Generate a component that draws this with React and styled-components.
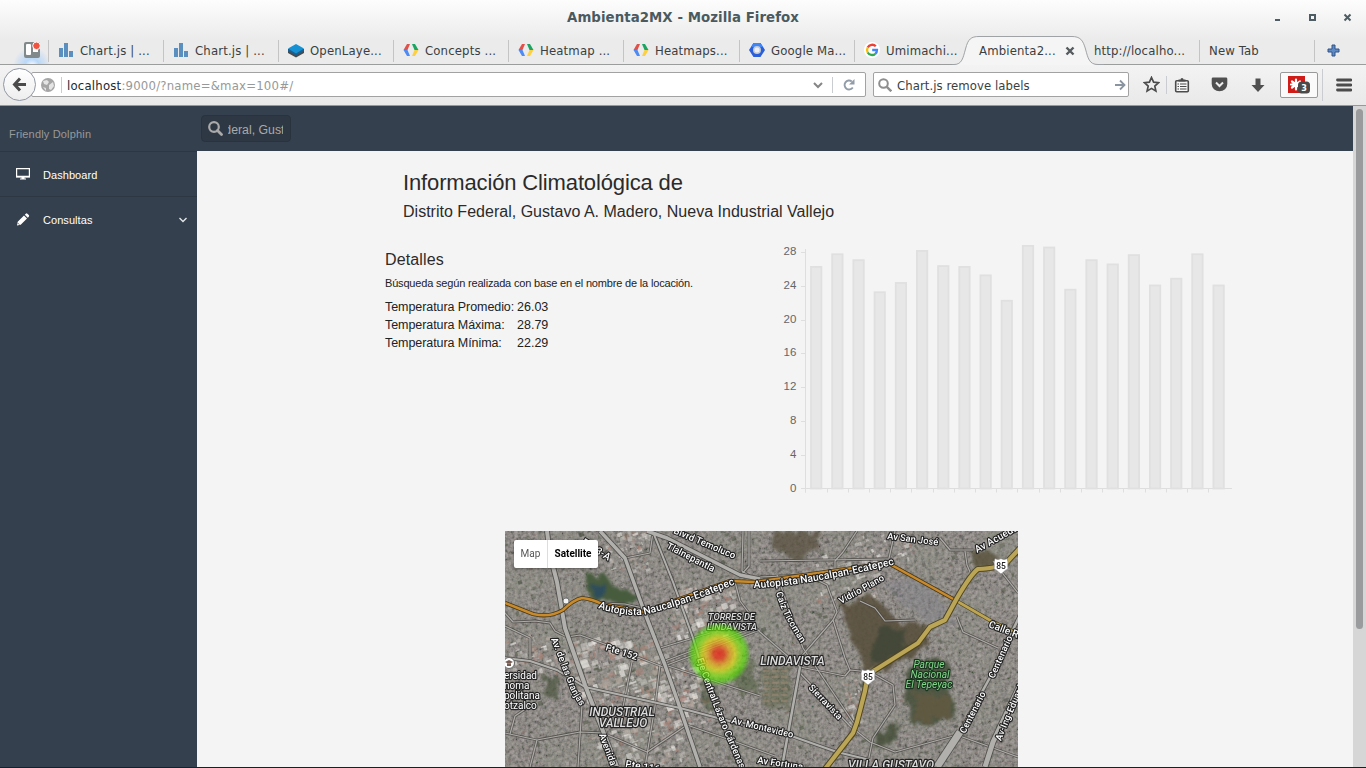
import React from 'react';
import styled, { createGlobalStyle } from 'styled-components';

const Global = createGlobalStyle`
  * { box-sizing: border-box; }
  html, body { margin: 0; height: 100%; overflow: hidden; }
  body { font-family: "Liberation Sans", Arial, sans-serif; color: #333; background: #f4f4f4; }
`;

const ui = '"DejaVu Sans Condensed", "DejaVu Sans", sans-serif';

const Window = styled.div`
  width: 1366px; height: 768px; display: flex; flex-direction: column;
  overflow: hidden; border-bottom: 1px solid #1e1e1e;
`;
const Chrome = styled.header`
  flex: none; height: 106px; display: flex; flex-direction: column;
  background: linear-gradient(#fdfdfd 0, #ebebeb 40px, #ebebeb 64px);
  font: 13px ${ui}; font-stretch: condensed; color: #3a3f42;
`;
const TitleBar = styled.div`
  height: 36px; display: grid; grid-template-columns: 110px 1fr 110px; align-items: center;
  font: bold 13.33px "DejaVu Sans", sans-serif; font-stretch: normal; color: #4a5a60;
  padding-bottom: 2px;
`;
const Title = styled.div`text-align: center; letter-spacing: 0.06px;`;
const WindowButtons = styled.svg`width: 110px; height: 34px;`;
const Strip = styled.div`height: 29px; display: flex; border-bottom: 1px solid #9b9c9c;`;
const Pinned = styled.div`
  width: 49px; display: flex; align-items: center; padding-left: 24px; position: relative;
  background: radial-gradient(circle at 32px 30px, #fff 0, #b9d8f8 7px, rgba(190, 216, 245, .5) 14px, transparent 19px);
  &::after { content: ''; position: absolute; right: 0; top: 4px; bottom: 2px; width: 1px; background: #c4c4c4; }
`;
const Tab = styled.div`
  width: ${(p) => p.$w || 115}px; display: flex; align-items: center; gap: 6px; padding-left: 9px;
  position: relative; white-space: nowrap;
  &::after {
    content: ''; position: absolute; right: 0; top: 4px; bottom: 2px; width: 1px;
    background: ${(p) => (p.$plain ? 'transparent' : '#c4c4c4')};
  }
`;
const Label = styled.span`position: relative; letter-spacing: 0.15px;`;
const TabShape = styled.svg`position: absolute; left: -18px; top: 0; width: 152px; height: 29px;`;
const CloseMark = styled.svg`position: absolute; left: 95px; top: 10px; width: 10px; height: 10px;`;
const NewTab = styled.div`width: 36px; display: grid; place-items: center;`;
const Icon = styled.svg`flex: none; display: block; width: ${(p) => p.$s || 16}px; height: ${(p) => p.$s || 16}px;`;

const Toolbar = styled.div`
  height: 41px; display: flex; align-items: center; padding: 0 11px 1px 3px;
  background: linear-gradient(#f3f3f3, #e9e9e9); border-bottom: 1px solid #96999b;
`;
const Back = styled.div`
  width: 33px; height: 33px; border-radius: 50%; border: 1px solid #8f98a4; background: linear-gradient(#fff, #eee);
  display: grid; place-items: center; flex: none; z-index: 1;
`;
const Field = styled.div`
  width: ${(p) => p.$w}px; height: 25px; display: flex; align-items: center; background: #fff;
  border: 1px solid #a2a2a2; border-radius: 2px; margin-left: ${(p) => p.$ml}px; padding-left: ${(p) => p.$pl}px; white-space: pre;
`;
const Url = styled.div`flex: 1; padding-top: 2px; letter-spacing: 0.21px; color: #96999a; span { color: #24292c; }`;
const Query = styled.div`flex: 1; margin-left: 5px; padding-top: 2px; letter-spacing: 0.06px;`;
const Rule = styled.div`width: 1px; height: ${(p) => p.$h}px; background: #c9cdd1; margin: 0 ${(p) => p.$r}px 0 ${(p) => p.$l}px;`;
const Tools = styled.div`display: flex; align-items: center; margin-left: 14px;`;
const Addon = styled.div`
  width: 38px; height: 26px; margin-left: 14px; border: 1px solid #999; border-radius: 2px; background: #fafafa;
  display: grid; place-items: center;
`;

const Page = styled.div`flex: 1; display: flex; min-height: 0; background: #f4f4f4;`;
const Sidebar = styled.nav`width: 197px; background: #34404d; flex: none; font-size: 11px; color: #fff;`;
const Brand = styled.div`height: 46px; padding: 21px 9px 0; color: #999; border-bottom: 1px solid #2c3742; line-height: 14px; letter-spacing: 0.17px;`;
const Item = styled.div`
  height: 45px; display: flex; align-items: center; padding: 0 9px 0 15px;
  border-bottom: ${(p) => (p.$last ? 'none' : '1px solid #2c3742')};
  span { margin-left: 12px; flex: 1; padding-top: 1px; letter-spacing: 0.06px; }
`;
const Main = styled.main`flex: 1; display: flex; flex-direction: column; min-width: 0;`;
const Topbar = styled.div`height: 45px; flex: none; background: #34404d; padding: 9px 4px;`;
const Search = styled.div`
  width: 90px; height: 27px; border-radius: 4px; background: #2d3844; border: 1px solid #29333e;
  display: flex; align-items: center; padding-left: 6px; color: #aaa; font-size: 12px;
`;
const Clip = styled.div`
  width: 55px; margin-left: 5px; overflow: hidden; display: flex; justify-content: flex-end;
  white-space: nowrap; padding-top: 2px; font-size: 12.3px;
  span { margin-right: -1.5px; }
`;
const Heading = styled.div`padding: 19px 0 0 206px;`;
const H1 = styled.h1`margin: 0; font-weight: 400; font-size: 22px; line-height: 26px; color: #2b2b2b; letter-spacing: -0.14px;`;
const H2 = styled.h2`margin: 5px 0 0; font-weight: 400; font-size: 16px; line-height: 22px; color: #2b2b2b; letter-spacing: 0.015px;`;
const Columns = styled.div`display: flex; padding: 17px 0 0 188px; height: 308px;`;
const Details = styled.section`width: 385px; padding-top: 10px;`;
const H3 = styled.h3`margin: 0; font-weight: 400; font-size: 16px; line-height: 20px; color: #2b2b2b; letter-spacing: 0.14px;`;
const Note = styled.p`margin: 6px 0 7px; font-size: 11px; line-height: 15px; color: #222; letter-spacing: -0.175px;`;
const Stats = styled.dl`
  margin: 0; display: grid; grid-template-columns: 132px auto; line-height: 18px; font-size: 12.5px; color: #222;
  dt, dd { margin: 0; white-space: nowrap; }
  dt { letter-spacing: -0.07px; }
`;
const ChartSvg = styled.svg`width: 480px; height: 262px; font: 11.5px "Liberation Sans", sans-serif;`;
const MapFrame = styled.div`width: 513px; height: 236px; margin-left: 308px; position: relative; overflow: hidden;`;
const MapSvg = styled.svg`display: block; width: 513px; height: 236px; font-family: Roboto, sans-serif;`;
const MapTypes = styled.div`
  position: absolute; left: 9px; top: 9px; display: flex; height: 28px; border-radius: 2px; background: #fff;
  box-shadow: 0 1px 3px rgba(0, 0, 0, .4); font: 10px/28px Roboto, sans-serif;
`;
const MapType = styled.div`
  width: ${(p) => p.$w}px; text-align: center; color: ${(p) => (p.$on ? '#000' : '#565656')};
  font-weight: ${(p) => (p.$on ? 700 : 400)}; border-left: ${(p) => (p.$on ? '1px solid #ddd' : 'none')};
`;
const Scroll = styled.div`width: 13px; background: #d6d6d6; padding: 3px 3px 0;`;
const Thumb = styled.div`height: 520px; width: 7px; border-radius: 4px; background: #999b9d;`;

const ChartMark = () => (
  <Icon viewBox="0 0 16 16" fill="#5b8fc0"><path d="M1 6h4v9H1zM6 1h4v14H6zM11 9h4v6h-4z" /></Icon>
);
const DevMark = () => (
  <Icon viewBox="0 0 16 16">
    <path d="M4 2h3L4.500 8H0.500z" fill="#e2504a" /><path d="M.5 8h4L7 14H4z" fill="#4d8bf5" />
    <path d="M9 2h3l3.500 6h-4z" fill="#1da463" /><path d="M11.500 8h4L12 14H9z" fill="#fdd041" />
  </Icon>
);
const LayersMark = () => (
  <Icon viewBox="0 0 16 16">
    <path d="M0 8v3l8 4.500 8-4.500V8z" fill="#4a4a4a" /><path d="M0 7v2l8 4.500 8-4.500V7z" fill="#1b5f91" />
    <path d="M0 6.500 8 2l8 4.500L8 11.500z" fill="#1591d4" />
  </Icon>
);
const HexMark = () => (
  <Icon viewBox="0 0 16 16">
    <path d="M4.500 1h7L16 8l-4.500 7h-7L0 8z" fill="#2b5fd9" /><path d="M4.500 1h7L14 5H2z" fill="#4285f4" />
    <circle cx="8" cy="8" r="4" fill="#c4c9d2" /><circle cx="8" cy="8" r="2.500" fill="#eceff4" />
  </Icon>
);
const GMark = () => (
  <Icon viewBox="0 0 16 16" fill="none" strokeWidth="2.300">
    <circle cx="8" cy="8" r="8" fill="#fff" />
    <path d="M11.800 4.300A5 5 0 0 0 3.700 5.500" stroke="#ea4335" /><path d="M3.700 5.500a5 5 0 0 0 0 5" stroke="#fbbc05" />
    <path d="M3.700 10.500a5 5 0 0 0 7.600 1.300" stroke="#34a853" /><path d="M11.300 11.800A4.800 4.800 0 0 0 13 8H8.200" stroke="#4285f4" />
  </Icon>
);

const temps = [26.3, 27.8, 27.1, 23.3, 24.4, 28.2, 26.4, 26.3, 25.3, 22.29, 28.79, 28.6, 23.6, 27.1, 26.6, 27.7, 24.1, 24.9, 27.8, 24.1];
const Chart = () => {
  const base = 248.5;
  const k = 8.44;
  return (
    <ChartSvg viewBox="0 0 480 262">
      <g stroke="#dedede">
        <path d={`M35.500 9V${base + 4}M31 ${base}H462`} fill="none" />
        {[4, 8, 12, 16, 20, 24, 28].map((v) => <path key={v} d={`M31 ${Math.round(base - v * k) + 0.5}h5`} />)}
        {temps.map((_, i) => <path key={i} d={`M${Math.floor(35.9 + i * 21.2) + 0.5} ${base}v4`} />)}
      </g>
      {[0, 4, 8, 12, 16, 20, 24, 28].map((v) => (
        <text key={v} x="26.300" y={base - v * k + 3} textAnchor="end" fill="#666">{v}</text>
      ))}
      {temps.map((t, i) => (
        <rect key={i} x={41 + i * 21.18} y={base - t * k + 0.4} width="10.400" height={t * k - 0.4} fill="#e7e7e7" stroke="#e0e0e0" strokeWidth="1.800" />
      ))}
    </ChartSvg>
  );
};

function random(seed) {
  let s = seed;
  return () => {
    s = (s * 1664525 + 1013904223) % 4294967296;
    return s / 4294967296;
  };
}
const rnd = random(77);
const scatter = (n, [x, y, w, h], colors, max) =>
  Array.from({ length: n }, () => ({
    x: x + rnd() * w, y: y + rnd() * h, w: 1 + rnd() * max, h: 1 + rnd() * max * 0.8,
    c: colors[Math.floor(rnd() * colors.length)], a: 0.2 + rnd() * 0.45,
  }));
const roofs = ['#b0aaa5', '#98918b', '#8f857e', '#86706a', '#5f5d5a', '#504e4b', '#86858a'];
const pale = ['#f0eeea', '#d3cfca', '#dfdbd6', '#b9aaa0', '#a97f72'];
const trees = ['#4f5744', '#5b6050', '#464e40'];
const blocks = [
  ...scatter(1300, [0, 0, 513, 236], roofs, 3.4),
  ...scatter(300, [0, 0, 513, 236], trees, 4.5),
  ...scatter(210, [62, 108, 95, 62], pale, 8),
  ...scatter(130, [165, 55, 62, 50], pale, 7),
  ...scatter(100, [160, 135, 45, 60], pale, 6),
  ...scatter(120, [85, 165, 90, 70], pale, 7),
  ...scatter(70, [0, 105, 60, 40], pale, 5),
  ...scatter(60, [100, 0, 45, 40], pale, 5),
  ...scatter(60, [310, 25, 60, 45], pale, 6),
  ...scatter(35, [335, 145, 20, 50], pale, 6),
  ...scatter(50, [345, 0, 60, 30], pale, 4),
];

const minor = [
  'M0 82L8 91 30 90 45 92 50 100 62 106', 'M0 95L25 107 25 130', 'M62 106L75 104 102 114 158 136',
  'M5 203L10 185 28 173', 'M0 202L32 209 75 201 98 202 142 221 182 194', 'M32 209L25 236', 'M77 174L73 236',
  'M127 131L118 176', 'M155 117L205 102', 'M162 134L255 99', 'M160 130L250 96 255 101',
  'M120 27L145 22 148 1', 'M238 0L237 40 246 46', 'M244 0V35L236 44', 'M230 51L235 70 250 90',
  'M272 44L298 117 352 197', 'M255 101L295 136', 'M295 142L345 195 365 211 390 221 452 204 513 226',
  'M295 136L340 145 345 139 365 141 388 154 390 174 368 207 362 236', 'M328 89L295 127 295 136',
  'M255 46L302 44 322 54 332 81 328 89 340 127 345 139', 'M352 0L338 21 330 30 330 40', 'M390 0L383 32',
  'M435 7L445 19 468 19M460 20L462 34 465 41', 'M452 86L458 101 480 111 493 117', 'M488 30L513 62',
  'M355 70L370 77 380 90 410 89', 'M182 194L228 210 270 225', 'M138 77L120 73 95 72', 'M155 134L150 175 140 236',
  'M255 30L383 28', 'M160 134L255 165',
];
const major = [
  ['M42 0L45 24 52 51 60 97 80 154 112 236', 4], ['M95 0L120 27 138 77 160 134 175 177 195 236', 3.5],
  ['M0 127L25 130 52 139 80 156 175 177 228 191 255 194 332 221 365 229', 2],
  ['M148 1L168 51 188 107 202 154 235 236', 2], ['M142 0L162 7 235 44 255 48', 3.5], ['M295 136L277 236', 2.5],
  ['M515 84L488 141 455 201', 2.5], ['M455 201L432 236', 7], ['M515 154L488 211 480 236', 5],
];
const highway = 'M0 72L28 83Q45 87 58 79Q68 69 77 67Q87 68 97 73L138 81 225 50 250 51 383 32 450 69';
const route85 = 'M515 17L502 31Q495 37 473 38 466 43 452 67L440 89 425 96 413 112 370 139Q362 143 360 160L352 191 348 202 320 238';
const route85East = 'M450 69L488 91 513 103';

const labels = [
  ['p1', 'M93 77Q115 85 138 84Q175 76 240 49', 'Autopista Naucalpan-Ecatepec', 10.4],
  ['p2', 'M249 57Q295 56 400 31', 'Autopista Naucalpan-Ecatepec', 10.35],
  ['p3', 'M168 2L248 36', 'Blvrd Temoluco', 9.5], ['p4', 'M161 17L225 50', 'Tlalnepantla', 9.5],
  ['p5', 'M46 108L64 154Q68 166 82 184', 'Av. de las Granjas', 9.3],
  ['p6', 'M100 119L150 135', 'Pte 152', 9.5],
  ['p7', 'M192 128Q205 170 241 252', 'Eje Central Lázaro Cárdenas', 9.4],
  ['p8', 'M226 192L309 212', 'Av. Montevideo', 9.2],
  ['p9', 'M94 204Q102 225 112 252', 'Avenida Ceylán', 9.4],
  ['p10', 'M271 62Q277 85 302 121', 'Calz Ticoman', 9.3],
  ['p11', 'M336 73L401 37', 'Vidrio Plano', 9.2],
  ['p12', 'M303 157L353 210', 'Sierravista', 9.3],
  ['p13', 'M382 8L453 17', 'Av San José', 9.3],
  ['p14', 'M472 22L533 -12', 'Av Acueducto', 10],
  ['p15', 'M483 96L534 115', 'Calle Rio', 10],
  ['p16', 'M489 148L516 88', 'Centenario', 9.3], ['p17', 'M460 203L492 141', 'Centenario', 9.3],
  ['p18', 'M496 210Q507 182 540 108', 'Av-Ing-Eduardo Molina', 9.3],
  ['p19', 'M120 236L180 246', 'Pte 116', 10], ['p20', 'M252 232L330 244', 'Av Fortuna', 9.5],
  ['p21', 'M76 13L115 37', 'Eje 3-A', 10],
];
const areas = [
  [226.5, 89, 'TORRES DE', 9.3], [227, 98.5, 'LINDAVISTA', 9.3], [287.5, 133.5, 'LINDAVISTA', 12],
  [117, 185, 'INDUSTRIAL', 12], [118, 195.5, 'VALLEJO', 12], [386, 238, 'VILLA GUSTAVO', 12],
];

const Shield = ({ x, y }) => (
  <g transform={`translate(${x} ${y})`}>
    <path d="M-6-7.500Q-3-5.500 0-7.500 3-5.500 6-7.500L7-4Q6.500 0 7 3 4 4 2 6.500L0 8-2 6.500Q-4 4-7 3-6.500 0-7-4z" fill="#fff" stroke="#777" strokeWidth=".6" />
    <text y="3" textAnchor="middle" fontSize="8.500" fontWeight="500" fill="#222">85</text>
  </g>
);

const SatelliteMap = () => (
  <MapSvg viewBox="0 0 513 236">
    <defs>
      <filter id="grain" x="0" y="0" width="100%" height="100%">
        <feTurbulence type="fractalNoise" baseFrequency="0.3" numOctaves="3" seed="4" />
        <feColorMatrix values="1.3 0 0 0 -.2  1.2 .1 0 0 -.21  1.2 0 .1 0 -.22  0 0 0 0 1" />
      </filter>
      <filter id="patches" x="0" y="0" width="100%" height="100%">
        <feTurbulence type="fractalNoise" baseFrequency="0.025" numOctaves="3" seed="9" />
        <feColorMatrix values="0 0 0 0 .26  0 0 0 0 .28  0 0 0 0 .22  2 0 0 0 -.78" />
      </filter>
      <filter id="ragged" x="-20%" y="-20%" width="140%" height="140%">
        <feTurbulence type="fractalNoise" baseFrequency="0.08" numOctaves="3" seed="2" />
        <feDisplacementMap in="SourceGraphic" scale="16" />
        <feGaussianBlur stdDeviation="1.500" />
      </filter>
      <radialGradient id="heat">
        <stop offset="0" stopColor="#e82a1c" stopOpacity=".85" /><stop offset=".16" stopColor="#e8401c" stopOpacity=".8" />
        <stop offset=".34" stopColor="#eca41c" stopOpacity=".74" /><stop offset=".5" stopColor="#e2dc14" stopOpacity=".72" />
        <stop offset=".66" stopColor="#8ee414" stopOpacity=".72" /><stop offset=".82" stopColor="#58e600" stopOpacity=".62" />
        <stop offset="1" stopColor="#50f000" stopOpacity="0" />
      </radialGradient>
    </defs>
    <rect width="513" height="236" fill="#736d68" />
    <rect width="513" height="236" filter="url(#grain)" opacity=".42" />
    <rect width="513" height="236" filter="url(#patches)" opacity=".5" />
    {blocks.map((b, i) => <rect key={i} x={b.x} y={b.y} width={b.w} height={b.h} fill={b.c} opacity={b.a} transform={`rotate(-18 ${b.x} ${b.y})`} />)}
    <g filter="url(#ragged)">
      <path d="M84 46L98 41 110 58 132 62 130 74 84 70z" fill="#465c3c" /><path d="M88 55L101 53 100 70 90 68z" fill="#2e4d5c" />
      <path d="M265 0H318L312 20 290 30 268 18z" fill="#5a5240" opacity=".75" />
      <path d="M336 74L362 62 380 76 394 92 416 88 424 112 402 128 362 146 348 112z" fill="#564c3a" opacity=".85" />
      <path d="M372 98L402 96 398 122 366 134z" fill="#3c4634" opacity=".75" />
      <path d="M402 142L420 128 444 130 442 152 452 182 432 192 406 192 400 166z" fill="#46503a" opacity=".85" />
      <path d="M412 162L446 166 442 186 408 190z" fill="#665840" opacity=".7" />
      <path d="M466 18L492 22 488 34 468 36z" fill="#55503a" opacity=".8" />
      <path d="M372 202L396 194 390 210 366 216z" fill="#45503a" opacity=".85" />
      <path d="M258 136H288L284 176H256z" fill="#5c6447" opacity=".5" />
      <path d="M225 142L248 128 252 160 236 166z" fill="#53603f" opacity=".6" />
      <path d="M38 145L58 148 54 170 38 166z" fill="#4c5540" opacity=".75" />
      <path d="M195 150L208 150 214 178 200 180z" fill="#4a563e" opacity=".6" />
      <path d="M376 50L420 48 450 90 430 94 398 76z" fill="#81828c" opacity=".4" />
    </g>
    <g fill="#a98d77" opacity=".4">
      {[0, 1, 2, 3, 4, 5].map((r) => [0, 1, 2].map((c) => <rect key={`${r}${c}`} x={258 + c * 9} y={139 + r * 6} width="6.500" height="2" />))}
    </g>
    <g fill="none" strokeLinejoin="round">
      {minor.map((d) => <path key={d} d={d} stroke="#44423f" strokeWidth="2.800" opacity=".7" />)}
      {minor.map((d) => <path key={`${d}l`} d={d} stroke="#adaba7" strokeWidth="1.200" />)}
      {major.map(([d, w]) => <path key={d} d={d} stroke="#474644" strokeWidth={w + 1.7} opacity=".85" />)}
      {major.map(([d, w]) => <path key={`${d}l`} d={d} stroke="#b1b0ac" strokeWidth={w} />)}
      <path d={highway} stroke="#49391b" strokeWidth="4.200" />
      <path d={highway} stroke="#c98a2b" strokeWidth="2.500" />
      <path d={route85East} stroke="#4e4523" strokeWidth="4.200" /><path d={route85East} stroke="#bda552" strokeWidth="2.600" />
      <path d={route85} stroke="#4e4523" strokeWidth="6.200" />
      <path d={route85} stroke="#bba556" strokeWidth="4.200" />
    </g>
    <g fill="#fff" stroke="#242424" strokeWidth="2.300" paintOrder="stroke" strokeLinejoin="round">
      {labels.map(([id, d, text, size]) => (
        <g key={id}>
          <path id={id} d={d} fill="none" stroke="none" />
          <text fontSize={size} fontWeight="500"><textPath href={`#${id}`}>{text}</textPath></text>
        </g>
      ))}
      {areas.map(([x, y, text, size], i) => (
        <text key={i} x={x} y={y} textAnchor="middle" fontSize={size} fontStyle="italic" fontWeight="500" fill="#ddd">{text}</text>
      ))}
      <g fontSize="10">
        {['ersidad', 'noma', 'politana', 'otzalco'].map((t, i) => <text key={t} x="-1" y={148 + i * 10}>{t}</text>)}
      </g>
      <g fontSize="10.200" fontStyle="italic" textAnchor="middle" fill="#82d68a" stroke="#1c3420">
        <text x="424" y="136.500">Parque</text><text x="425" y="146.500">Nacional</text><text x="424" y="156.500">El Tepeyac</text>
      </g>
    </g>
    <circle cx="214" cy="123" r="32" fill="url(#heat)" />
    <circle cx="4" cy="132" r="5.500" fill="#fff" stroke="#666" /><path d="M0 131l4-2 4 2-4 2zM2 132.500v2.500h4v-2.500" fill="#765b52" />
    <circle cx="61" cy="70" r="3" fill="#f3f3f3" stroke="#777" />
    <Shield x={496} y={35} /><Shield x={363} y={146} />
  </MapSvg>
);

const tabs = [
  [ChartMark, 'Chart.js | ...'], [ChartMark, 'Chart.js | ...'], [LayersMark, 'OpenLaye...'], [DevMark, 'Concepts ...'],
  [DevMark, 'Heatmap ...'], [DevMark, 'Heatmaps...', 116], [HexMark, 'Google Ma...'], [GMark, 'Umimachi...', 115, true],
];

export default function App() {
  return (
    <Window>
      <Global />
      <Chrome>
        <TitleBar>
          <div />
          <Title>Ambienta2MX - Mozilla Firefox</Title>
          <WindowButtons viewBox="0 0 110 34" fill="none" stroke="#4d5d63">
            <path d="M19 20h5" strokeWidth="2" /><rect x="54" y="15" width="5" height="5" strokeWidth="2" />
            <path d="M88.500 14.500l6 6m0-6l-6 6" strokeWidth="2" />
          </WindowButtons>
        </TitleBar>
        <Strip>
          <Pinned>
            <Icon viewBox="0 0 16 16">
              <rect y="0" width="16" height="16" rx="2" fill="#82898b" /><rect x="2" y="2" width="5" height="11" rx="1" fill="#fff" />
              <rect x="9" y="3" width="5" height="7" fill="#fff" /><circle cx="12.500" cy="3.800" r="3.800" fill="#f05340" stroke="#fff" />
            </Icon>
          </Pinned>
          {tabs.map(([Mark, text, w, plain], i) => (
            <Tab key={i} $w={w} $plain={plain}><Mark /><Label>{text}</Label></Tab>
          ))}
          <Tab $plain>
            <TabShape viewBox="0 0 152 29">
              <path d="M0 29V28.500H2C10 28.500 11 22 13.500 13 16 3 19 .5 27 .5H120C128 .5 131 4 133.500 13 136 22 137 28.500 146 28.500H152V29z" fill="#f5f5f5" />
              <path d="M0 28.500H2C10 28.500 11 22 13.500 13 16 3 19 .5 27 .5H120C128 .5 131 4 133.500 13 136 22 137 28.500 146 28.500H152" fill="none" stroke="#a0a3a6" />
            </TabShape>
            <Label>Ambienta2...</Label>
            <CloseMark viewBox="0 0 10 10"><path d="M1.500 1.500l7 7m0-7l-7 7" stroke="#555b5e" strokeWidth="2.400" /></CloseMark>
          </Tab>
          <Tab><Label>http://localho...</Label></Tab>
          <Tab><Label>New Tab</Label></Tab>
          <NewTab>
            <Icon $s={13} viewBox="0 0 13 13"><path d="M5 1h3v4h4v3H8v4H5V8H1V5h4z" fill="#5d8ac4" stroke="#2f538b" /></Icon>
          </NewTab>
        </Strip>
        <Toolbar>
          <Back><Icon $s={15} viewBox="0 0 15 15"><path d="M8 1.500L2.500 7.500 8 13.500M3 7.500h11" fill="none" stroke="#4b4b4b" strokeWidth="3" /></Icon></Back>
          <Field $w={835} $ml={-5} $pl={9}>
            <Icon $s={14} viewBox="0 0 14 14"><circle cx="7" cy="7" r="7" fill="#a5a5a5" /><path d="M2 3l4-1 2 2-2 3-3-1zM8 7l4-3 1 4-3 4-2-1zM2 9l3 1v3z" fill="#e4e4e4" /></Icon>
            <Rule $h={16} $l={6} $r={5} />
            <Url><span>localhost</span>:9000/?name=&amp;max=100#/</Url>
            <Icon $s={10} viewBox="0 0 10 10"><path d="M1 3l4 4 4-4" fill="none" stroke="#858585" strokeWidth="2" /></Icon>
            <Rule $h={16} $l={9} $r={10} />
            <Icon $s={12} viewBox="0 0 12 12"><path d="M9.800 8.500A4.500 4.500 0 1 1 8.800 2.400" fill="none" stroke="#929ca8" strokeWidth="1.900" /><path d="M11.500 0v5.500H6z" fill="#929ca8" /></Icon>
            <Rule $h={0} $l={0} $r={9} />
          </Field>
          <Field $w={256} $ml={7} $pl={4}>
            <Icon $s={14} viewBox="0 0 14 14"><circle cx="5.500" cy="5.500" r="4.300" fill="none" stroke="#8e8e8e" strokeWidth="2" /><path d="M8.800 8.800l4.500 4.500" stroke="#8e8e8e" strokeWidth="2.400" /></Icon>
            <Query>Chart.js remove labels</Query>
            <Icon $s={12} viewBox="0 0 12 12"><path d="M1 6h9M6 1.500L10.500 6 6 10.500" fill="none" stroke="#8a94a0" strokeWidth="1.800" /></Icon>
            <Rule $h={0} $l={0} $r={1} />
          </Field>
          <Tools>
            <Icon $s={17} viewBox="0 0 17 17"><path d="M8.500 1.500l2.100 4.700 5 .5-3.800 3.400 1.100 5-4.400-2.700-4.400 2.700 1.100-5L1.400 6.700l5-.5z" fill="none" stroke="#4b4b4b" strokeWidth="1.700" /></Icon>
            <Rule $h={18} $l={6} $r={7} />
            <Icon viewBox="0 0 16 16"><rect x="1.700" y="3.700" width="12.600" height="11" rx="1" fill="#f7f7f7" stroke="#4b4b4b" strokeWidth="1.600" /><path d="M4.500 4.500V2.500h2a1.500 1.500 0 0 1 3 0h2v2z" fill="#4b4b4b" /><path d="M3.500 7h1.500m1 0h6.500M3.500 9.500h1.500m1 0h6.500M3.500 12h1.500m1 0h6.500" stroke="#4b4b4b" strokeWidth="1.200" /></Icon>
            <Rule $h={0} $l={10} $r={10} />
            <Icon $s={17} viewBox="0 0 17 17"><path d="M2 1.500h13a1.300 1.300 0 0 1 1.300 1.300V8a7.800 7.300 0 0 1-15.600 0V2.800A1.300 1.300 0 0 1 2 1.500z" fill="#505050" /><path d="M5 6.500l3.500 3.500L12 6.500" fill="none" stroke="#eee" strokeWidth="2" /></Icon>
            <Rule $h={0} $l={11} $r={10} />
            <Icon viewBox="0 0 16 16"><path d="M5.500 1.500h5V8h4L8 15 1.500 8h4z" fill="#505050" /></Icon>
            <Addon>
              <Icon $s={22} viewBox="0 0 22 22">
                <rect x="0" y="2" width="17" height="17" fill="#cf1c18" />
                <path d="M8 5.500v10M4 7.500l8 6M4 13.500l8-6M3 10.500h10" stroke="#fff" strokeWidth="2.200" strokeLinecap="round" />
                <rect x="10" y="7.500" width="12" height="12" rx="3.500" fill="#4a4a4a" />
                <text x="16" y="16.800" textAnchor="middle" fontFamily="DejaVu Sans" fontWeight="bold" fontSize="9" fill="#fff">3</text>
              </Icon>
            </Addon>
            <Rule $h={32} $l={4} $r={13} />
            <Icon viewBox="0 0 16 16"><path d="M1.500 3h13.500M1.500 8h13.500M1.500 13h13.500" stroke="#4b4b4b" strokeWidth="2.800" strokeLinecap="round" /></Icon>
          </Tools>
        </Toolbar>
      </Chrome>
      <Page>
        <Sidebar>
          <Brand>Friendly Dolphin</Brand>
          <Item>
            <Icon viewBox="0 0 16 16"><path d="M1.600 2.600h12.800v8H1.600z" fill="none" stroke="#fff" strokeWidth="1.200" /><path d="M1 9.800h14v1.800H1zM6.500 11h3v1.500h1.500v1H5v-1h1.500z" fill="#fff" /></Icon>
            <span>Dashboard</span>
          </Item>
          <Item $last>
            <Icon viewBox="0 0 16 16"><path d="M2 13.500l.7-3.700 6.300-6.300 3 3-6.300 6.300zM9.800 2.700l1-1q.8-.7 1.600 0l1.400 1.400q.7.800 0 1.600l-1 1z" fill="#fff" /><path d="M3 11.300l1.200 1.200" stroke="#34404d" /></Icon>
            <span>Consultas</span>
            <Icon $s={10} viewBox="0 0 10 10"><path d="M1.500 3L5 6.500 8.500 3" fill="none" stroke="#e3e6e8" strokeWidth="1.400" /></Icon>
          </Item>
        </Sidebar>
        <Main>
          <Topbar>
            <Search>
              <Icon $s={15} viewBox="0 0 15 15"><circle cx="6" cy="6" r="4.800" fill="none" stroke="#aaa" strokeWidth="2.200" /><path d="M9.500 9.500l4 4" stroke="#aaa" strokeWidth="2.800" strokeLinecap="round" /></Icon>
              <Clip><span>Distrito Federal, Gust</span></Clip>
            </Search>
          </Topbar>
          <Heading>
            <H1>Información Climatológica de</H1>
            <H2>Distrito Federal, Gustavo A. Madero, Nueva Industrial Vallejo</H2>
          </Heading>
          <Columns>
            <Details>
              <H3>Detalles</H3>
              <Note>Búsqueda según realizada con base en el nombre de la locación.</Note>
              <Stats>
                <dt>Temperatura Promedio:</dt><dd>26.03</dd>
                <dt>Temperatura Máxima:</dt><dd>28.79</dd>
                <dt>Temperatura Mínima:</dt><dd>22.29</dd>
              </Stats>
            </Details>
            <Chart />
          </Columns>
          <MapFrame>
            <SatelliteMap />
            <MapTypes><MapType $w={33}>Map</MapType><MapType $w={51} $on>Satellite</MapType></MapTypes>
          </MapFrame>
        </Main>
        <Scroll><Thumb /></Scroll>
      </Page>
    </Window>
  );
}
